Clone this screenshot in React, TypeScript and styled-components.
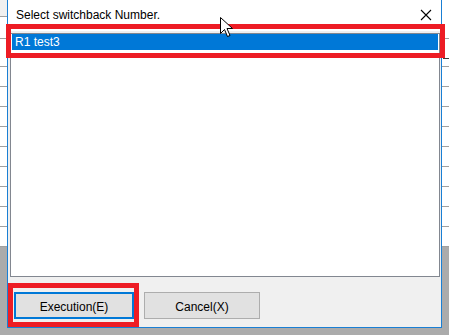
import React from "react";
import styled, { createGlobalStyle } from "styled-components";

const Global = createGlobalStyle`
  html, body { margin: 0; padding: 0; }
  body { font-family: "Liberation Sans", Arial, sans-serif; }
`;

const Page = styled.div`
  position: relative;
  width: 449px;
  height: 335px;
  overflow: hidden;
  box-sizing: border-box;
  padding: 0 7px;
  display: flex;
  align-items: flex-start;
  background:
    linear-gradient(#a0a0a0, #a0a0a0) 0 38px / 100% 1px no-repeat,
    linear-gradient(#a0a0a0, #a0a0a0) 0 16px / 7px 1px no-repeat,
    linear-gradient(#f0f0f0, #f0f0f0) 0 0 / 7px 16px no-repeat,
    linear-gradient(#3c3c3c, #3c3c3c) 443px 58px / 6px 1px no-repeat,
    repeating-linear-gradient(to bottom, transparent 0 19px, #a0a0a0 19px 20px) 0 47px / 100% 200px no-repeat,
    linear-gradient(to bottom, #ffffff 0 247px, #ababab 247px);
`;

const Dialog = styled.div`
  width: 435px;
  height: 328px;
  box-sizing: border-box;
  border: 1px solid #1a7fd4;
  border-top: none;
  background: #f0f0f0;
  display: flex;
  flex-direction: column;
`;

const TitleBar = styled.div`
  height: 31px;
  flex: none;
  background: #ffffff;
  display: flex;
  align-items: center;
  justify-content: space-between;
  padding: 0 8px 0 8px;
`;

const Title = styled.span`
  font-size: 12px;
  line-height: 31px;
  color: #000;
`;

const CloseButton = styled.span`
  width: 12px;
  height: 12px;
  display: flex;
  margin-right: 1px;
  margin-top: -1px;
`;

const Client = styled.div`
  flex: 1;
  display: flex;
  flex-direction: column;
  padding: 2px 1px 0 2px;
`;

const ListBox = styled.div`
  height: 244px;
  box-sizing: border-box;
  border: 1px solid #828790;
  background: #ffffff;
  padding: 0 1px;
  display: flex;
  flex-direction: column;
`;

const ListItem = styled.div<{ $selected?: boolean }>`
  position: relative;
  height: 16px;
  line-height: 16px;
  font-size: 12px;
  padding-left: 3px;
  background: ${(p) => (p.$selected ? "#0078d7" : "transparent")};
  color: ${(p) => (p.$selected ? "#ffffff" : "#000000")};
`;

const ButtonRow = styled.div`
  display: flex;
  gap: 10px;
  padding: 15px 0 0 4px;
`;

const Button = styled.div<{ $primary?: boolean; $w: number }>`
  position: relative;
  width: ${(p) => p.$w}px;
  height: 27px;
  box-sizing: border-box;
  border: ${(p) => (p.$primary ? "2px solid #0078d7" : "1px solid #adadad")};
  background: #e1e1e1;
  font-size: 12px;
  color: #000;
  display: flex;
  align-items: center;
  justify-content: center;
  padding-top: 2px;
`;

const Highlight = styled.span<{ $t: number; $r: number; $b: number; $l: number }>`
  position: absolute;
  top: ${(p) => p.$t}px;
  right: ${(p) => p.$r}px;
  bottom: ${(p) => p.$b}px;
  left: ${(p) => p.$l}px;
  border: 5px solid #ed1c24;
  pointer-events: none;
`;

const Cursor = styled.svg`
  position: absolute;
  left: 220px;
  top: 17px;
`;

export default function App() {
  return (
    <>
      <Global />
      <Page>
        <Dialog>
          <TitleBar>
            <Title>Select switchback Number.</Title>
            <CloseButton>
              <svg width="12" height="12" viewBox="0 0 12 12">
                <path d="M1 1 L11 11 M11 1 L1 11" stroke="#000" strokeWidth="1.1" fill="none" />
              </svg>
            </CloseButton>
          </TitleBar>
          <Client>
            <ListBox>
              <ListItem $selected>
                R1 test3
                <Highlight $t={-10} $r={-7} $b={-8} $l={-6} />
              </ListItem>
            </ListBox>
            <ButtonRow>
              <Button $primary $w={120}>
                Execution(E)
                <Highlight $t={-11} $r={-7} $b={-10} $l={-8} />
              </Button>
              <Button $w={116}>Cancel(X)</Button>
            </ButtonRow>
          </Client>
        </Dialog>
        <Cursor width="14" height="21" viewBox="0 0 14 21">
          <path
            d="M0.5 0.5 L0.5 16.5 L4.5 12.5 L7.5 19.5 L10 18.5 L7 11.5 L12.5 11.5 Z"
            fill="#ffffff"
            stroke="#000000"
            strokeWidth="1"
          />
        </Cursor>
      </Page>
    </>
  );
}
